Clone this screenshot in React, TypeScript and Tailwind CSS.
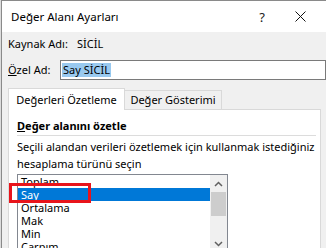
export default function App() {
  const items = ["Toplam", "Say", "Ortalama", "Mak", "Min", "Çarpım"];
  return (
    <div
      className="relative flex h-[248px] w-[326px] overflow-hidden bg-[#f0f0f0] text-[11px] text-black"
      style={{ fontFamily: '"Noto Sans", "Liberation Sans", sans-serif' }}
    >
      <div className="w-px shrink-0 bg-[#dcdcdc]" />
      <div className="w-px shrink-0 bg-[#8a8a8a]" />
      <div className="flex min-w-0 flex-1 flex-col border-t border-[#8a8a8a]">
        {/* Title bar */}
        <div className="flex h-[31px] shrink-0 items-center bg-white pl-[9px]">
          <span className="text-[11.5px] leading-4">Değer Alanı Ayarları</span>
          <span className="ml-auto mr-[30px] text-[13px] leading-4 text-[#222]">?</span>
          <svg width="11" height="11" viewBox="0 0 11 11" className="mr-[20px]">
            <path d="M0.5 0.5 L10.5 10.5 M10.5 0.5 L0.5 10.5" stroke="#111" strokeWidth="1" />
          </svg>
        </div>

        <div className="flex flex-col pl-[6px]">
          {/* Kaynak Adı */}
          <div className="mt-[4px] flex h-4 items-center leading-4">
            <span className="w-[69px]">Kaynak Adı:</span>
            <span>SİCİL</span>
          </div>

          {/* Özel Ad */}
          <div className="mt-[8px] flex h-[20px] items-center">
            <span className="w-[52px] leading-4">
              <span className="underline">Ö</span>zel Ad:
            </span>
            <div className="flex h-[20px] flex-1 items-center border border-[#7a7a7a] bg-white pl-px">
              <span className="bg-[#99c9ef] px-px leading-[14px]">Say SİCİL</span>
            </div>
          </div>

          {/* Tabs */}
          <div className="mt-[8px] flex h-[21px] items-end">
            <div className="relative z-10 -mb-px flex h-[22px] w-[117px] items-center justify-center border border-b-0 border-[#d9d9d9] bg-white leading-4">
              Değerleri Özetleme
            </div>
            <div className="flex h-[19px] w-[97px] items-center justify-center border border-l-0 border-b-0 border-[#d9d9d9] leading-4">
              Değer Gösterimi
            </div>
          </div>

          {/* Panel */}
          <div className="h-[170px] w-[313px] border border-[#d9d9d9] bg-white pl-[8px] pr-[4px]">
            <div className="mt-[8px] font-bold leading-4">
              <span className="underline">D</span>eğer alanını özetle
            </div>
            <div className="mt-px h-px bg-[#dcdcdc]" />
            <p className="mt-[2px] leading-[17px]">
              Seçili alandan verileri özetlemek için kullanmak istediğiniz hesaplama türünü seçin
            </p>

            {/* Listbox */}
            <div className="mt-[2px] flex h-[100px] w-[211px] border border-[#828790] bg-white">
              <div className="flex flex-1 flex-col">
                {items.map((it, i) => (
                  <div
                    key={it}
                    className={`h-[13px] shrink-0 pl-[3px] leading-[13px] ${
                      i === 1 ? "bg-[#0078d7] text-white" : ""
                    }`}
                  >
                    {it}
                  </div>
                ))}
              </div>
              <div className="flex h-[74px] w-[17px] shrink-0 flex-col items-center bg-[#f0f0f0]">
                <svg width="9" height="6" viewBox="0 0 9 6" className="mt-[6px]">
                  <path d="M1 5 L4.5 1.5 L8 5" fill="none" stroke="#606060" strokeWidth="1.5" />
                </svg>
                <div className="mt-[5px] h-[24px] w-[15px] bg-[#cdcdcd]" />
                <svg width="9" height="6" viewBox="0 0 9 6" className="mt-auto mb-[2px]">
                  <path d="M1 1 L4.5 4.5 L8 1" fill="none" stroke="#606060" strokeWidth="1.5" />
                </svg>
              </div>
            </div>
          </div>
        </div>
      </div>

      {/* Red annotation box */}
      <div className="absolute left-[9px] top-[183px] h-[20px] w-[82px] border-[3px] border-[#e8141b]" />
    </div>
  );
}
